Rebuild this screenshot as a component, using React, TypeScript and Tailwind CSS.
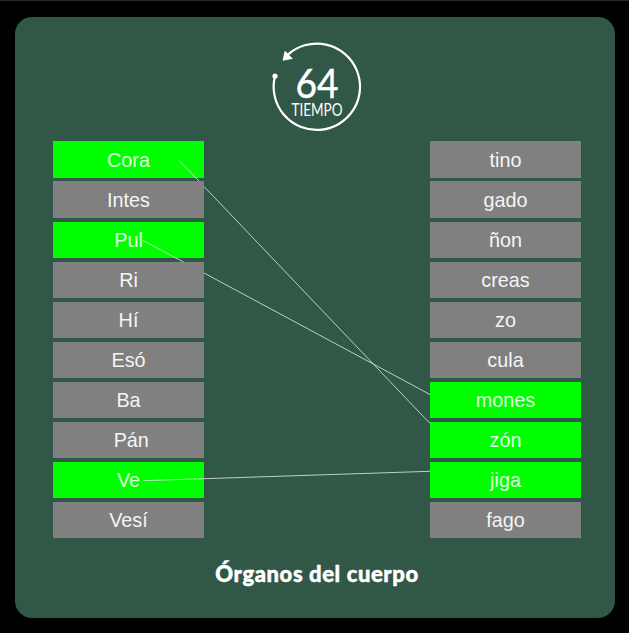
type Item = { text: string; matched?: boolean };

const left: Item[] = [
  { text: 'Cora', matched: true },
  { text: 'Intes' },
  { text: 'Pul', matched: true },
  { text: 'Ri' },
  { text: 'Hí' },
  { text: 'Esó' },
  { text: 'Ba' },
  { text: '\u00a0Pán' },
  { text: 'Ve', matched: true },
  { text: 'Vesí' },
];

const right: Item[] = [
  { text: 'tino' },
  { text: 'gado' },
  { text: 'ñon' },
  { text: 'creas' },
  { text: 'zo' },
  { text: 'cula' },
  { text: 'mones', matched: true },
  { text: 'zón', matched: true },
  { text: 'jiga', matched: true },
  { text: 'fago' },
];

function Column({ items }: { items: Item[] }) {
  return (
    <div className="flex w-[151px] flex-col">
      {items.map((item, i) => (
        <div
          key={item.text}
          className={`flex items-center justify-center text-[19.8px] leading-[36px] ${
            i < 2 ? 'h-[37px]' : 'h-9'
          } ${i === 0 ? 'mb-[3px]' : 'mb-1'} ${
            item.matched ? 'bg-[#00ff00] text-[#e0ffe0]' : 'bg-[#808080] text-[#f5f5f5]'
          }`}
        >
          {item.text}
        </div>
      ))}
    </div>
  );
}

function Timer() {
  return (
    <svg className="h-[94px] w-[94px]" viewBox="268 40 94 94" fill="none">
      <path d="M288 54.6A43.2 43.2 0 1 1 275 76" stroke="#fff" strokeWidth="2.2" />
      <circle cx="275" cy="76" r="2.6" fill="#fff" />
      <path d="M282.6 60.8L284.7 50.8L288 53.6L290 56L293 58.8Z" fill="#fff" />
      <text
        x="295.5"
        y="98.4"
        fill="#fff"
        stroke="#fff"
        strokeWidth="0.5"
        fontSize="41"
        textLength="43"
        lengthAdjust="spacingAndGlyphs"
        className="font-['Lato',sans-serif]"
      >
        64
      </text>
      <text
        x="291.5"
        y="115.7"
        fill="#fff"
        fontSize="16.5"
        textLength="51"
        lengthAdjust="spacingAndGlyphs"
        className="font-['Lato',sans-serif]"
      >
        TIEMPO
      </text>
    </svg>
  );
}

export default function App() {
  return (
    <div className="h-[633px] w-[629px] border-t border-[#292929] bg-black pl-[15px] pt-4 font-['Liberation_Sans',Arial,sans-serif]">
      <main className="relative flex h-[601px] w-[600px] flex-col items-center rounded-[17px] bg-[#315746] pt-[23px]">
        <Timer />
        <div className="mt-[7px] flex w-full justify-between pl-[38px] pr-[34px]">
          <Column items={left} />
          <Column items={right} />
        </div>
        <h1 className="mt-4 whitespace-nowrap pl-1 font-['Lato',sans-serif] text-[22px] font-black leading-8 tracking-[0.6px] text-white [-webkit-text-stroke:0.5px_white]">
          Órganos del cuerpo
        </h1>
        <svg
          className="pointer-events-none absolute inset-0 h-full w-full"
          viewBox="15 17 600 601"
          fill="none"
          stroke="#e0eee5"
          strokeWidth="0.8"
        >
          <path d="M179 160.5L199 181M204 186.5L430 423.5" />
          <path d="M143 240.5L183.5 262M204 273L430 394.5" />
          <path d="M143 480.7L430 471.3" />
        </svg>
      </main>
    </div>
  );
}
